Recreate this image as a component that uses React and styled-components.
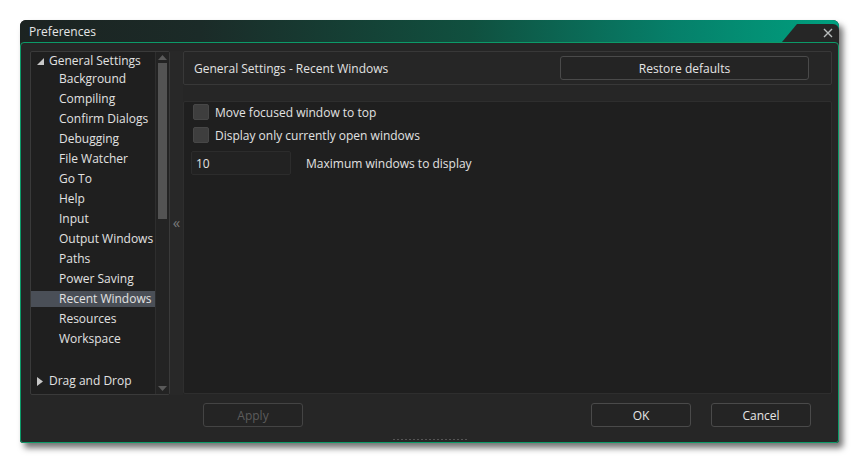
import styled, { createGlobalStyle } from "styled-components";

const GlobalStyle = createGlobalStyle`
  body {
    margin: 0;
    background: #ffffff;
    font-family: "Open Sans", "Noto Sans", sans-serif;
  }
`;

const treeItems = [
  "Background",
  "Compiling",
  "Confirm Dialogs",
  "Debugging",
  "File Watcher",
  "Go To",
  "Help",
  "Input",
  "Output Windows",
  "Paths",
  "Power Saving",
  "Recent Windows",
  "Resources",
  "Workspace",
];

const App = () => {
  return (
    <>
      <GlobalStyle />
      <Page>
        <Window>
          <TitleBar>
            <Title>Preferences</Title>
            <CloseTab>
              <svg width="10" height="10" viewBox="0 0 10 10">
                <path d="M1 1L9 9M9 1L1 9" stroke="#b8bcbc" strokeWidth="1.4" />
              </svg>
            </CloseTab>
          </TitleBar>
          <Body>
            <Main>
              <TreePanel>
                <TreeList>
                  <TreeRow $level={0}>
                    <Arrow>
                      <svg width="7" height="7" viewBox="0 0 7 7">
                        <path d="M7 0L7 7L0 7Z" fill="#c8c8c8" />
                      </svg>
                    </Arrow>
                    General Settings
                  </TreeRow>
                  {treeItems.map((item) => (
                    <TreeRow
                      key={item}
                      $level={1}
                      $selected={item === "Recent Windows"}
                    >
                      {item}
                    </TreeRow>
                  ))}
                  <TreeGap />
                  <TreeRow $level={0}>
                    <Arrow>
                      <svg width="6" height="9" viewBox="0 0 6 9">
                        <path d="M0 0L6 4.5L0 9Z" fill="#c8c8c8" />
                      </svg>
                    </Arrow>
                    Drag and Drop
                  </TreeRow>
                </TreeList>
                <ScrollBar>
                  <ScrollArrow>
                    <svg width="9" height="5" viewBox="0 0 9 5">
                      <path d="M0 5L4.5 0L9 5Z" fill="#5a5a5a" />
                    </svg>
                  </ScrollArrow>
                  <ScrollTrack>
                    <ScrollThumb />
                  </ScrollTrack>
                  <ScrollArrow>
                    <svg width="9" height="5" viewBox="0 0 9 5">
                      <path d="M0 0L4.5 5L9 0Z" fill="#5a5a5a" />
                    </svg>
                  </ScrollArrow>
                </ScrollBar>
              </TreePanel>
              <Splitter>
                <span>«</span>
              </Splitter>
              <RightColumn>
                <Header>
                  <HeaderTitle>General Settings - Recent Windows</HeaderTitle>
                  <Button $width={249}>Restore defaults</Button>
                </Header>
                <Content>
                  <CheckRow>
                    <CheckBox />
                    Move focused window to top
                  </CheckRow>
                  <CheckRow>
                    <CheckBox />
                    Display only currently open windows
                  </CheckRow>
                  <FieldRow>
                    <NumberInput>10</NumberInput>
                    <FieldLabel>Maximum windows to display</FieldLabel>
                  </FieldRow>
                </Content>
              </RightColumn>
            </Main>
            <Footer>
              <Button $width={100} $disabled>
                Apply
              </Button>
              <FooterRight>
                <Button $width={100}>OK</Button>
                <Button $width={100}>Cancel</Button>
              </FooterRight>
            </Footer>
            <Grip />
          </Body>
        </Window>
      </Page>
    </>
  );
};

const Page = styled.div`
  padding: 20px 0 0 20px;
  width: 860px;
  height: 463px;
  box-sizing: border-box;
`;

const Window = styled.div`
  width: 819px;
  height: 423px;
  display: flex;
  flex-direction: column;
  border-radius: 6px 6px 3px 3px;
  box-shadow: 4px 5px 6px rgba(0, 0, 0, 0.55);
  background: #262626;
`;

const TitleBar = styled.div`
  height: 22px;
  display: flex;
  align-items: flex-end;
  justify-content: space-between;
  border-radius: 6px 6px 0 0;
  background: linear-gradient(
    90deg,
    #1c2321 0%,
    #1b2b28 22%,
    #10503f 55%,
    #06806a 80%,
    #00a07f 100%
  );
`;

const Title = styled.div`
  color: #e6e6e6;
  font-size: 12px;
  line-height: 22px;
  padding: 1px 0 0 9px;
  align-self: center;
`;

const CloseTab = styled.div`
  width: 57px;
  height: 18px;
  background: #262626;
  clip-path: polygon(15px 0, 100% 0, 100% 100%, 0 100%);
  display: flex;
  align-items: center;
  justify-content: flex-end;
  padding-right: 6px;
  box-sizing: border-box;
  border-top-right-radius: 6px;
`;

const Body = styled.div`
  flex: 1;
  display: flex;
  flex-direction: column;
  border: 1px solid #0c9a68;
  border-radius: 4px 4px 3px 3px;
  padding: 8px 6px 0 9px;
  position: relative;
`;

const Main = styled.div`
  display: flex;
  height: 344px;
`;

const TreePanel = styled.div`
  width: 140px;
  box-sizing: border-box;
  border: 1px solid #3a3a3a;
  background: #1f1f1f;
  display: flex;
  border-radius: 2px;
`;

const TreeList = styled.div`
  flex: 1;
  display: flex;
  flex-direction: column;
  padding-top: 1px;
`;

const TreeRow = styled.div`
  height: 16px;
  line-height: 16px;
  margin-bottom: ${(p) => (p.$level === 0 ? "2px" : "4px")};
  display: flex;
  align-items: center;
  padding-left: ${(p) => (p.$level === 0 ? "6px" : "28px")};
  color: #e2e2e2;
  font-size: 12px;
  white-space: nowrap;
  background: ${(p) => (p.$selected ? "#4a4f57" : "transparent")};
`;

const Arrow = styled.span`
  width: 12px;
  display: inline-flex;
  align-items: center;
`;

const TreeGap = styled.div`
  height: 22px;
`;

const ScrollBar = styled.div`
  width: 13px;
  display: flex;
  flex-direction: column;
  background: #232323;
  border-left: 1px solid #2e2e2e;
`;

const ScrollArrow = styled.div`
  height: 11px;
  display: flex;
  align-items: center;
  justify-content: center;
`;

const ScrollTrack = styled.div`
  flex: 1;
  padding: 0 2px;
`;

const ScrollThumb = styled.div`
  height: 156px;
  background: #535353;
`;

const Splitter = styled.div`
  width: 13px;
  background: #282828;
  display: flex;
  align-items: center;
  justify-content: center;
  color: #7a7a7a;
  font-size: 15px;
  span {
    margin-top: -3px;
  }
`;

const RightColumn = styled.div`
  width: 649px;
  display: flex;
  flex-direction: column;
  gap: 16px;
`;

const Header = styled.div`
  height: 34px;
  box-sizing: border-box;
  border: 1px solid #383838;
  border-radius: 2px;
  display: flex;
  align-items: center;
  justify-content: space-between;
  padding: 0 22px 0 10px;
`;

const HeaderTitle = styled.div`
  color: #e2e2e2;
  font-size: 12px;
`;

const Button = styled.div`
  width: ${(p) => p.$width}px;
  height: 24px;
  box-sizing: border-box;
  border: 1px solid #4a4a4a;
  border-radius: 3px;
  background: #242424;
  display: flex;
  align-items: center;
  justify-content: center;
  font-size: 12px;
  color: ${(p) => (p.$disabled ? "#5c5c5c" : "#e6e6e6")};
  border-color: ${(p) => (p.$disabled ? "#444" : "#4a4a4a")};
`;

const Content = styled.div`
  height: 293px;
  box-sizing: border-box;
  border: 1px solid #2e2e2e;
  background: #1f1f1f;
  border-radius: 2px;
  padding: 2px 0 0 9px;
  display: flex;
  flex-direction: column;
`;

const CheckRow = styled.div`
  height: 16px;
  margin-bottom: 7px;
  display: flex;
  align-items: center;
  gap: 6px;
  color: #e2e2e2;
  font-size: 12px;
`;

const CheckBox = styled.div`
  width: 16px;
  height: 16px;
  box-sizing: border-box;
  background: #3e3e3e;
  border: 1px solid #474747;
  border-radius: 2px;
`;

const FieldRow = styled.div`
  display: flex;
  align-items: center;
  margin-left: -2px;
  margin-top: 1px;
`;

const NumberInput = styled.div`
  width: 100px;
  height: 24px;
  box-sizing: border-box;
  border: 1px solid #2c2c2c;
  background: #222222;
  border-radius: 2px;
  padding-left: 4px;
  display: flex;
  align-items: center;
  color: #e2e2e2;
  font-size: 12px;
`;

const FieldLabel = styled.div`
  margin-left: 15px;
  color: #e2e2e2;
  font-size: 12px;
`;

const Footer = styled.div`
  display: flex;
  justify-content: space-between;
  padding: 8px 21px 0 173px;
`;

const FooterRight = styled.div`
  display: flex;
  gap: 20px;
`;

const Grip = styled.div`
  position: absolute;
  bottom: 1px;
  left: 371px;
  width: 77px;
  height: 3px;
  background-image: radial-gradient(circle, #555 0.8px, transparent 1px);
  background-size: 4px 3px;
`;

export default App;
